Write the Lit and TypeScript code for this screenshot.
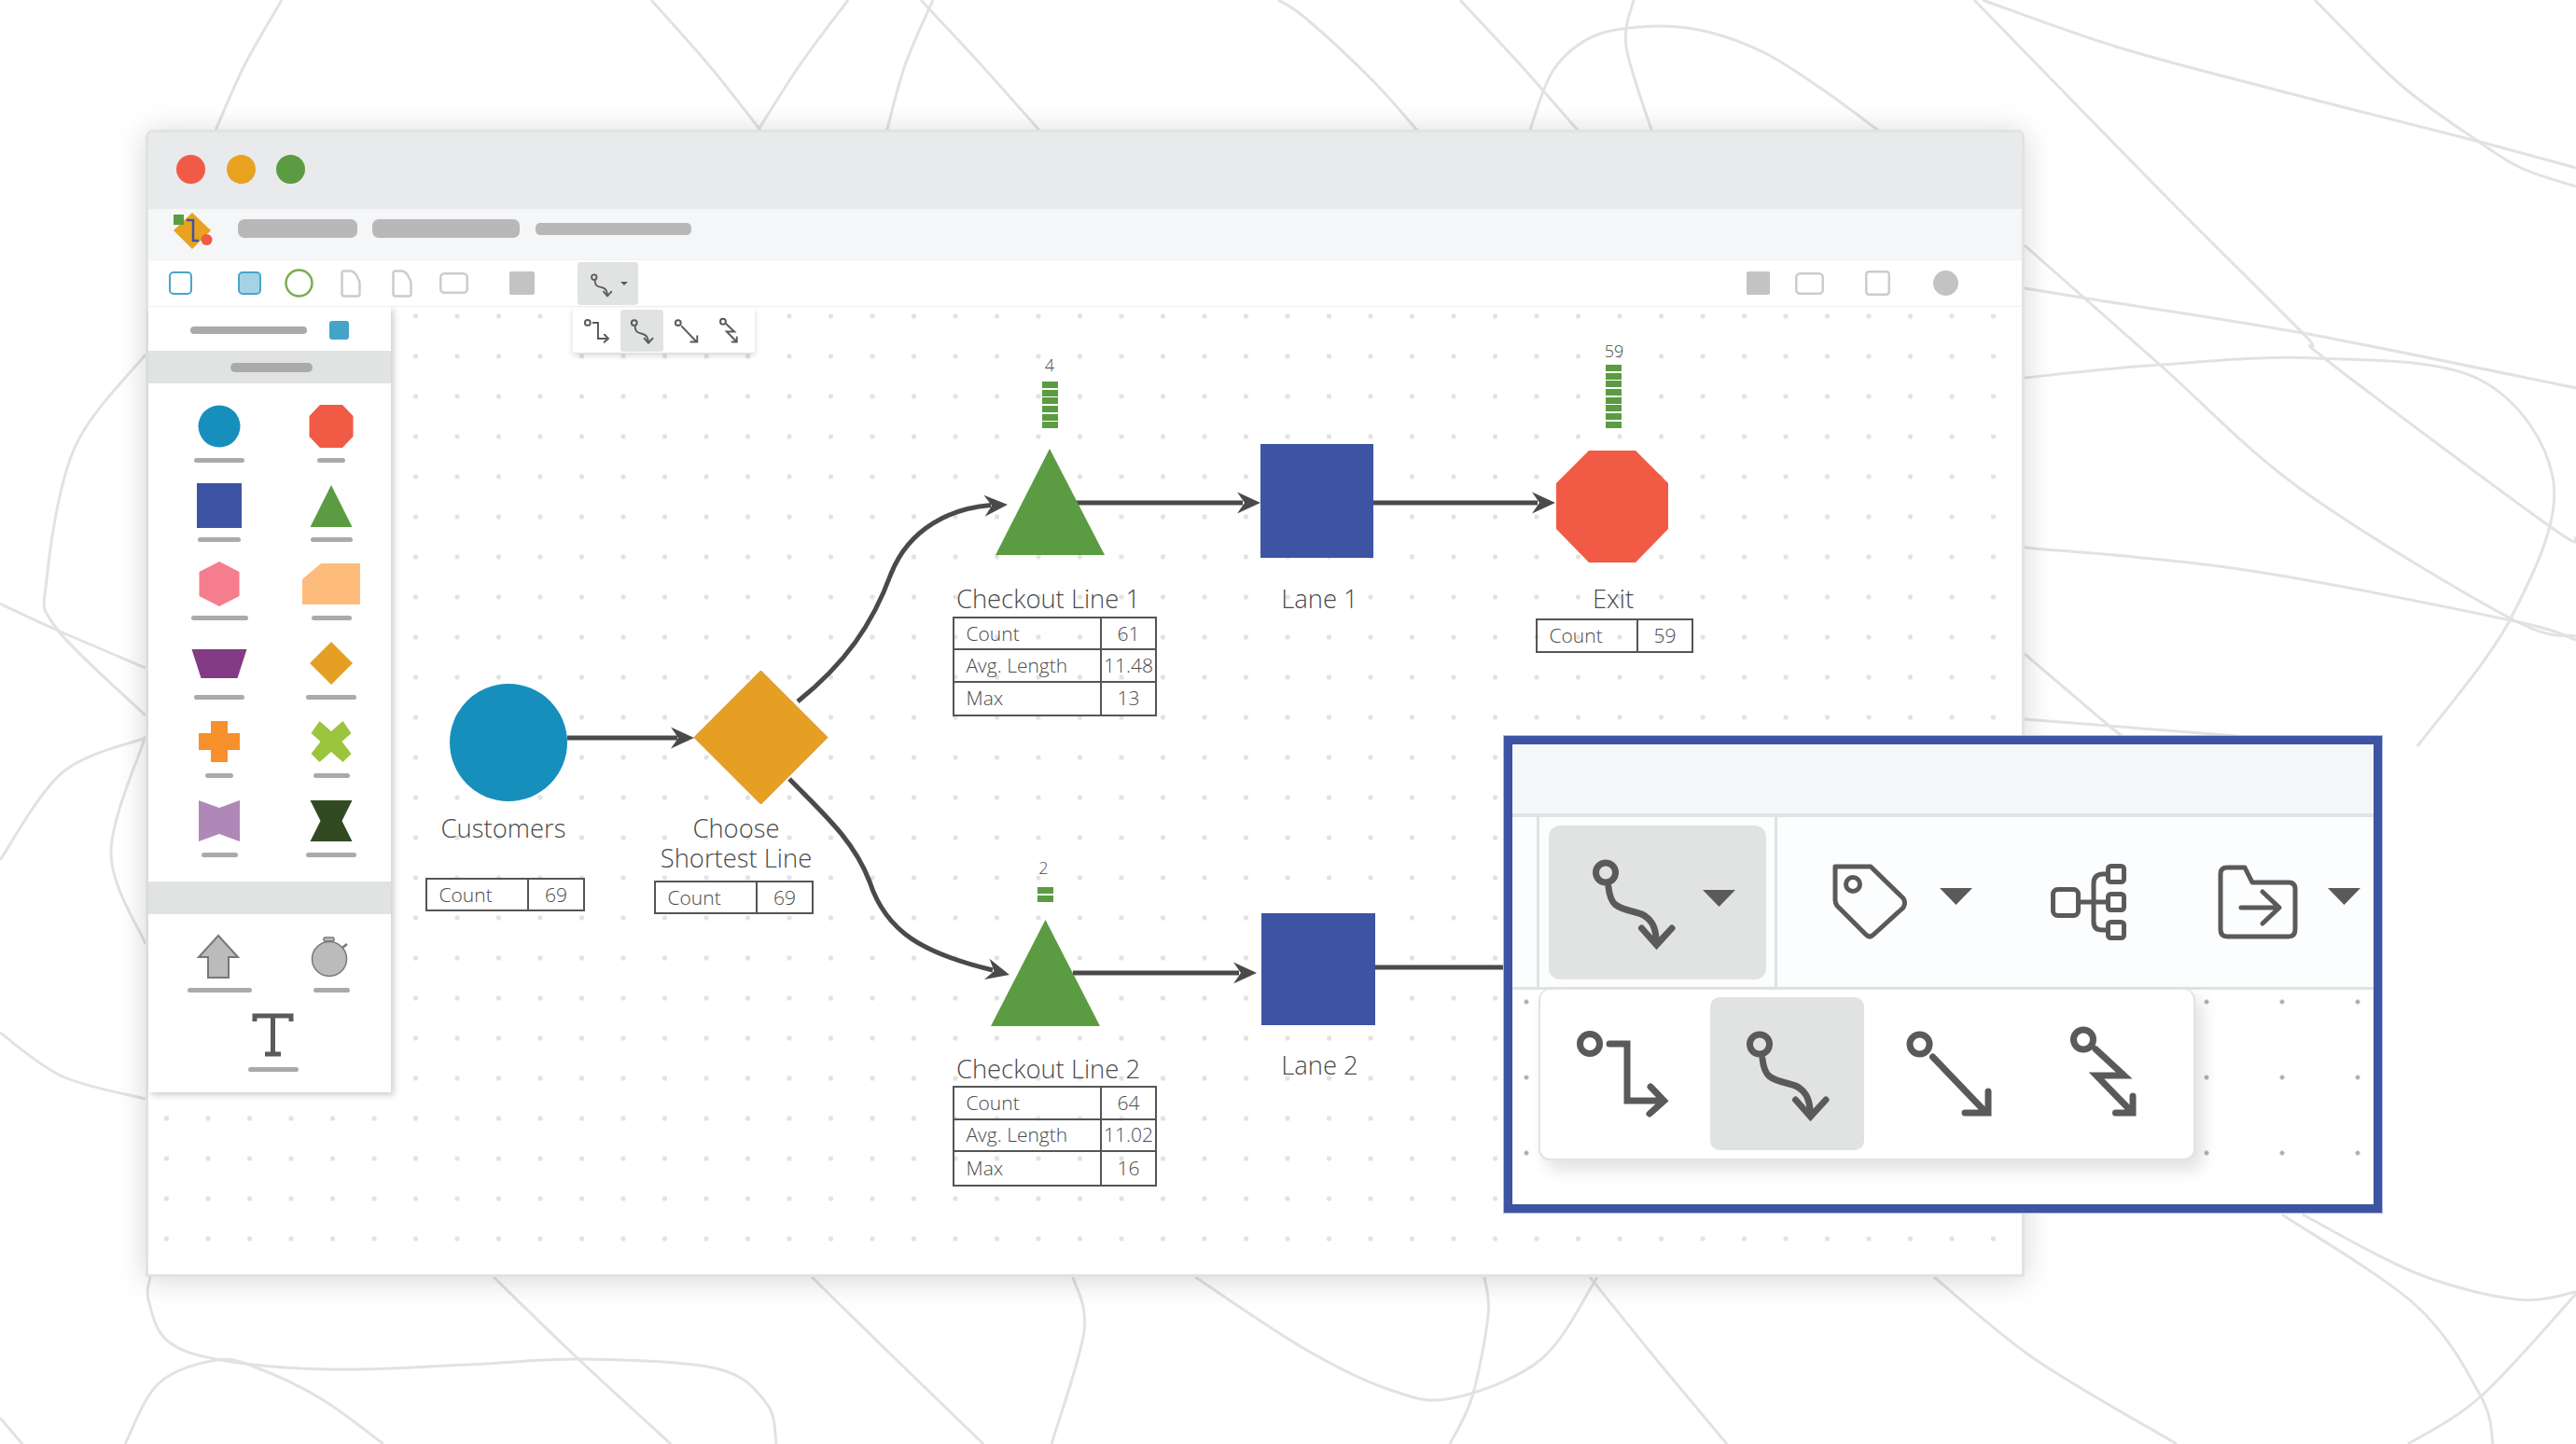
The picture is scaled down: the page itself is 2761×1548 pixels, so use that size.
import { LitElement, html, css, svg } from "lit";
import { customElement } from "lit/decorators.js";

type P = [number, number];

function smooth(pts: P[]): string {
  let d = `M${pts[0][0]} ${pts[0][1]}`;
  for (let i = 0; i < pts.length - 1; i++) {
    const p0 = pts[i - 1] || pts[i];
    const p1 = pts[i];
    const p2 = pts[i + 1];
    const p3 = pts[i + 2] || p2;
    const c1x = p1[0] + (p2[0] - p0[0]) / 6;
    const c1y = p1[1] + (p2[1] - p0[1]) / 6;
    const c2x = p2[0] - (p3[0] - p1[0]) / 6;
    const c2y = p2[1] - (p3[1] - p1[1]) / 6;
    d += ` C${c1x} ${c1y} ${c2x} ${c2y} ${p2[0]} ${p2[1]}`;
  }
  return d;
}

const BG: P[][] = [
  [[302, 0], [262, 70], [230, 142]],
  [[698, 0], [760, 70], [817, 142]],
  [[909, 0], [857, 70], [811, 142]],
  [[1000, 0], [970, 70], [950, 142]],
  [[987, 0], [1052, 70], [1116, 142]],
  [[1370, 0], [1400, 20], [1470, 85], [1521, 142]],
  [[1565, 0], [1630, 70], [1693, 142]],
  [[1751, 0], [1743, 50], [1771, 142]],
  [[1639, 142], [1665, 75], [1710, 38], [1775, 28], [1830, 34], [1892, 57], [1955, 97], [2016, 142]],
  [[2116, 0], [2311, 200], [2468, 357], [2495, 387], [2731, 563], [2761, 577]],
  [[2125, 0], [2268, 50], [2442, 97], [2650, 150], [2761, 180]],
  [[2481, 0], [2572, 90], [2654, 150], [2702, 180], [2761, 200]],
  [[2170, 263], [2315, 391], [2467, 525], [2691, 663], [2761, 682]],
  [[2170, 309], [2237, 320], [2468, 357], [2761, 416]],
  [[2170, 405], [2315, 391], [2482, 384], [2658, 407], [2737, 518], [2691, 663], [2591, 800]],
  [[2170, 587], [2400, 610], [2691, 665], [2761, 686]],
  [[2170, 701], [2258, 776], [2275, 789]],
  [[2170, 771], [2398, 789]],
  [[156, 380], [80, 480], [50, 621], [60, 673], [156, 767]],
  [[0, 647], [60, 675], [156, 716]],
  [[0, 922], [67, 828], [156, 791]],
  [[156, 789], [119, 914], [156, 1012]],
  [[0, 1107], [67, 1154], [156, 1178]],
  [[0, 1520], [24, 1548]],
  [[161, 1369], [159, 1393], [179, 1437], [237, 1458], [357, 1468], [500, 1463], [625, 1457], [768, 1467], [822, 1505], [832, 1548]],
  [[134, 1548], [170, 1483], [232, 1458], [277, 1467], [345, 1500], [411, 1548]],
  [[529, 1369], [620, 1457], [719, 1548]],
  [[870, 1369], [960, 1457], [1054, 1548]],
  [[1150, 1369], [1162, 1427], [1127, 1548]],
  [[1281, 1369], [1400, 1447], [1490, 1490], [1556, 1499], [1652, 1457], [1712, 1369]],
  [[1591, 1369], [1595, 1410], [1578, 1497], [1554, 1548]],
  [[1704, 1369], [1775, 1457], [1851, 1548]],
  [[2073, 1369], [2181, 1457], [2333, 1548]],
  [[2446, 1302], [2590, 1400], [2659, 1497], [2672, 1548]],
  [[2468, 1302], [2590, 1365], [2698, 1393], [2761, 1385]],
  [[2761, 1387], [2659, 1497], [2581, 1548]],
];

const ICON = {
  elbow: svg`<circle cx="46" cy="50" r="10.5" class="st6"/><path class="st7" d="M67 50H86V111H124M111 96L125.500 111L110 125"/>`,
  curve: svg`<circle cx="53" cy="50.5" r="10.5" class="st6"/><path class="st7" d="M56 66C58 85 64 88 85 93C103 97 107 110 107.5 126M91.5 110L107.5 128L124 110"/>`,
  straight: svg`<circle cx="49.5" cy="50.5" r="10.5" class="st6"/><path class="st7" d="M63.5 64L120 123M98 124H123V101"/>`,
  zig: svg`<circle cx="50" cy="45.5" r="10.5" class="st6"/><path class="st7" d="M63 55.6L93.7 84H64L102 123M84.5 124H103V106"/>`,
};
const ICON_LIST = [ICON.elbow, ICON.curve, ICON.straight, ICON.zig];

const g = (pts: string, fill: string) => svg`<polygon points="${pts}" fill="${fill}"/>`;

const SHAPES: { body: unknown; pill: number }[] = [
  { body: svg`<circle cx="35" cy="30" r="22.5" fill="#178fbd"/>`, pill: 54 },
  { body: g("23,7 47,7 58.500,19 58.500,41 47,53 23,53 11.500,41 11.500,19", "#f15a45"), pill: 30 },
  { body: g("11,6 59,6 59,54 11,54", "#3d54a3"), pill: 46 },
  { body: g("35,8 57.500,53 12.500,53", "#5b9c42"), pill: 45 },
  { body: g("35,6 56.500,17 56.500,43 35,54 13.500,43 13.500,17", "#f67d8d"), pill: 61 },
  { body: g("4,25 24,8 66,8 66,52 4,52", "#fdbc7c"), pill: 43 },
  { body: g("5.500,15 64.500,15 54.500,46 15.500,46", "#823b84"), pill: 54 },
  { body: g("35,7 58,30 35,53 12,30", "#e5a024"), pill: 54 },
  { body: g("26,8 44,8 44,21 57,21 57,39 44,39 44,52 26,52 26,39 13,39 13,21 26,21", "#f7902a"), pill: 30 },
  { body: g("13.500,21 22.500,8 35,19 47.500,8 56.500,21 46.500,30 56.500,43 47.500,52 35,41 22.500,52 13.500,43 23.500,30", "#9bc53d"), pill: 39 },
  { body: g("13,8 35,16 57,8 57,52 35,44 13,52", "#b088b8"), pill: 39 },
  { body: g("12.500,8 57.500,8 46.500,30 57.500,52 12.500,52 23.500,30", "#324a22"), pill: 54 },
];

const TOOLS = [
  { x: 181, w: 25, h: 25, body: svg`<rect x="1" y="1" width="23" height="23" rx="4" fill="#fff" stroke="#48a5cb" stroke-width="2"/>` },
  { x: 255, w: 25, h: 25, body: svg`<rect x="1" y="1" width="23" height="23" rx="4" fill="#a5d3e5" stroke="#48a5cb" stroke-width="2"/>` },
  { x: 305, w: 31, h: 31, body: svg`<circle cx="15.500" cy="15.500" r="14" fill="#fff" stroke="#79ad52" stroke-width="2.500"/>` },
  { x: 364, w: 23, h: 30, body: svg`<path d="M2.500 4Q2.500 1.500 5 1.500H11Q15 1.500 18 6L20 10Q21.500 12 21.500 15V26Q21.500 28.500 19 28.500H5Q2.500 28.500 2.500 26Z" fill="#fff" stroke="#ccc" stroke-width="2.500"/>` },
  { x: 419, w: 23, h: 30, body: svg`<path d="M2.500 4Q2.500 1.500 5 1.500H11Q15 1.500 18 6L20 10Q21.500 12 21.500 15V26Q21.500 28.500 19 28.500H5Q2.500 28.500 2.500 26Z" fill="#fff" stroke="#ccc" stroke-width="2.500"/>` },
  { x: 471, w: 31, h: 23, body: svg`<rect x="1.250" y="1.250" width="28.500" height="20.500" rx="4" fill="#fff" stroke="#ccc" stroke-width="2.500"/>` },
  { x: 546, w: 27, h: 25, body: svg`<rect width="27" height="25" rx="2" fill="#c4c3c3"/>` },
];
const TOOLS_RIGHT = [
  { x: 1872, w: 25, h: 25, body: svg`<rect width="25" height="25" rx="2" fill="#c4c3c3"/>` },
  { x: 1924, w: 31, h: 24, body: svg`<rect x="1.250" y="1.250" width="28.500" height="21.500" rx="4" fill="#fff" stroke="#ccc" stroke-width="2.500"/>` },
  { x: 1999, w: 27, h: 27, body: svg`<rect x="1.250" y="1.250" width="24.500" height="24.500" rx="3" fill="#fff" stroke="#ccc" stroke-width="2.500"/>` },
  { x: 2072, w: 27, h: 27, body: svg`<circle cx="13.500" cy="13.500" r="13.500" fill="#c4c3c3"/>` },
];

const OX = 159;
const OY = 329;

const LABELS: { t: string[]; x: number; y: number }[] = [
  { t: ["Customers"], x: 539.5, y: 887.5 },
  { t: ["Choose", "Shortest Line"], x: 789, y: 904 },
  { t: ["Checkout Line 1"], x: 1123.5, y: 641.5 },
  { t: ["Lane 1"], x: 1414.5, y: 641.5 },
  { t: ["Exit"], x: 1729, y: 641.5 },
  { t: ["Checkout Line 2"], x: 1123.5, y: 1145.5 },
  { t: ["Lane 2"], x: 1414.5, y: 1141.5 },
];

const TABLES: { x: number; y: number; w: number; c: number; h: number; rows: string[][] }[] = [
  { x: 456, y: 941, w: 171, c: 111, h: 36, rows: [["Count", "69"]] },
  { x: 701, y: 944, w: 171, c: 111, h: 36, rows: [["Count", "69"]] },
  { x: 1021, y: 661, w: 219, c: 160, h: 107, rows: [["Count", "61"], ["Avg. Length", "11.48"], ["Max", "13"]] },
  { x: 1646, y: 663, w: 169, c: 110, h: 37, rows: [["Count", "59"]] },
  { x: 1021, y: 1164, w: 219, c: 160, h: 108, rows: [["Count", "64"], ["Avg. Length", "11.02"], ["Max", "16"]] },
];

const COUNTERS = [
  { t: "4", tx: 1125, ty: 390.5, x: 1117, y: 409, n: 6 },
  { t: "59", tx: 1730, ty: 376, x: 1721, y: 391, n: 8 },
  { t: "2", tx: 1118.5, ty: 930, x: 1112, y: 951, n: 2 },
];

const ARROW = "0,0 -25,-11.500 -17,0 -25,11.500";
const arrow = (x: number, y: number, a = 0) =>
  svg`<polygon points="${ARROW}" fill="#4a4a4a" transform="translate(${x} ${y}) rotate(${a})"/>`;

@customElement("app-root")
export class AppRoot extends LitElement {
  static styles = css`
    :host { display: block; position: relative; width: 2761px; height: 1548px; background: #fff; overflow: hidden; font-family: "Open Sans", "Liberation Sans", sans-serif; color: #4a4a4a; }
    .bg { position: absolute; inset: 0; width: 2761px; height: 1548px; }
    .bg path { fill: none; stroke: #e1e2e2; stroke-width: 3; }
    .stage { position: relative; padding: 139px 0 0 156px; }
    .window { position: relative; box-sizing: border-box; width: 2014px; height: 1230px; border: 3px solid #e1e3e3; border-radius: 8px 8px 0 0; background: #fff; box-shadow: 0 3px 32px rgba(0, 0, 0, .17); display: flex; flex-direction: column; }
    .title { height: 82px; flex: none; background: #e9eaec; display: flex; align-items: center; gap: 22.500px; padding: 0 0 4px 30px; box-sizing: border-box; border-radius: 5px 5px 0 0; }
    .light { width: 31px; height: 31px; border-radius: 50%; }
    .red { background: #f15a45; } .amber { background: #e8a220; } .green { background: #5b9c42; }
    .menu { height: 54px; flex: none; box-sizing: border-box; background: #f5f6f8; display: flex; align-items: flex-start; padding: 4px 0 0 27px; }
    .logo { width: 42px; height: 39px; flex: none; }
    .mp { background: #b8b8b8; border-radius: 7px; height: 20px; margin-top: 7px; }
    .mp.a { width: 128px; margin-left: 27px; }
    .mp.b { width: 158px; margin-left: 16px; }
    .mp.c { width: 167px; height: 13px; margin: 11px 0 0 17px; border-radius: 5px; }
    .toolbar { position: relative; z-index: 3; height: 51px; flex: none; box-sizing: border-box; border-top: 1px solid #f1f2f3; border-bottom: 1px solid #eff0f1; display: flex; align-items: center; background: #fff; }
    .toolbar svg { display: block; flex: none; }
    .active { box-sizing: border-box; width: 65px; height: 46px; background: #e1e3e3; border-radius: 3px; display: flex; padding: 3px 0 0 4px; flex: none; }
    .active svg { width: 43px; height: 43px; }
    .active svg.mini-caret { width: 10px; height: 4px; margin: 18px 0 0 -2px; }
    .st6 { fill: none; stroke: #5a5a5a; stroke-width: 7; }
    .st7 { fill: none; stroke: #5a5a5a; stroke-width: 7; stroke-linejoin: miter; stroke-linecap: round; }
    .pop { position: absolute; left: 455px; top: 51px; z-index: 3; box-sizing: border-box; width: 195px; height: 48px; padding: 2px 3px; display: flex; gap: 2px; background: #fff; border-radius: 2px; box-shadow: 0 3px 6px rgba(0, 0, 0, .16); }
    .pop .it { width: 46px; height: 45px; border-radius: 3px; }
    .pop .it.on { background: #e1e3e3; }
    .pop svg { width: 46px; height: 46px; display: block; }

    .main { position: relative; flex: 1; display: flex; align-items: flex-start; background-color: #fff; background-image: radial-gradient(circle at center, #e2e2e2 0, #e2e2e2 2.500px, transparent 3px); background-size: 44.500px 43px; background-position: -2.750px -11.500px; }
    .side { position: relative; z-index: 2; box-sizing: border-box; width: 260px; height: 842px; background: #fff; box-shadow: 3px 3px 7px rgba(0, 0, 0, .2); display: flex; flex-direction: column; flex: none; }
    .side-top { height: 47px; flex: none; box-sizing: border-box; display: flex; align-items: center; padding: 2px 0 0 45px; gap: 24px; }
    .p-a { width: 125px; height: 8px; background: #aaa; border-radius: 4px; }
    .p-b { width: 21px; height: 20px; background: #45a3c9; border-radius: 3px; }
    .band { height: 35px; flex: none; background: #e1e3e3; display: flex; align-items: center; justify-content: center; }
    .band i { display: block; width: 88px; height: 10px; background: #aaa; border-radius: 5px; margin-left: 4px; }
    .grid { display: grid; grid-template-columns: 120px 120px; box-sizing: border-box; height: 534px; flex: none; padding: 16px 0 0 16px; row-gap: 15.500px; align-content: start; }
    .grid.two { padding-top: 15px; row-gap: 16px; height: auto; flex: 1; }
    .cell { display: flex; flex-direction: column; align-items: center; gap: 4px; }
    .cell svg { width: 70px; height: 60px; display: block; }
    .cell.wide { grid-column: 1 / 3; margin-left: -4px; }
    .cell u { display: block; height: 5px; background: #aaa; border-radius: 3px; }

    .diagram { position: absolute; left: 0; top: 0; width: 2008px; height: 1037px; pointer-events: none; }
    .node { position: absolute; transform: translate(-50%, -50%); white-space: nowrap; text-align: center; font-size: 27.400px; line-height: 32px; font-weight: 300; color: #4a4a4a; }
    .count { position: absolute; transform: translate(-50%, -50%); font-size: 18px; line-height: 20px; font-weight: 300; }
    .bars { position: absolute; display: flex; flex-direction: column; gap: 1.700px; }
    .bars i { display: block; width: 17px; height: 7px; background: #5b9c42; }
    .tbl { position: absolute; box-sizing: border-box; border: 2px solid #555; display: grid; background: transparent; font-size: 21px; font-weight: 300; color: #4a4a4a; }
    .tbl > div { display: flex; align-items: center; box-sizing: border-box; border-bottom: 2px solid #555; white-space: nowrap; line-height: 1; }
    .tbl > div.l { padding-left: 12.500px; border-right: 2px solid #555; }
    .tbl > div.v { justify-content: center; }
    .tbl > div.end { border-bottom: 0; }

    .callout { position: absolute; left: 1612px; top: 789px; z-index: 5; box-sizing: border-box; width: 941px; height: 511px; border: 9px solid #3d54a3; box-shadow: 0 0 0 1px #aeb8d8; background: #fff; display: flex; flex-direction: column; }
    .c-band { height: 74px; flex: none; background: #f5f6f8; border-bottom: 4px solid #e1e3e3; box-sizing: content-box; }
    .c-tools { height: 182px; flex: none; background: #fcfdfe; border-bottom: 3px solid #e1e3e3; display: flex; align-items: center; position: relative; }
    .c-tools .sep { width: 3px; height: 182px; background: #e1e3e3; flex: none; }
    .c-tools svg { display: block; flex: none; }
    .c-active { box-sizing: border-box; width: 233px; height: 165px; background: #e1e3e3; border-radius: 12px; display: flex; flex: none; padding-left: 8px; }
    .c-active svg { width: 165px; height: 165px; }
    .c-active svg.c-caret { width: 35px; height: 18px; margin: 69px 0 0 -8px; }
    .c-caret { width: 35px; height: 18px; margin-top: -13px; }
    .c-canvas { position: relative; flex: 1; background-color: #fff; background-image: radial-gradient(circle at center, #aaa 0, #aaa 2px, transparent 2.600px); background-size: 81px 81px; background-position: -25.500px -27.500px; }
    .c-pop { position: absolute; left: 28px; top: -1px; box-sizing: border-box; width: 704px; height: 184px; padding: 8px 7px; display: flex; gap: 10px; background: #fff; border: 2px solid #e1e3e3; border-top-width: 1px; border-radius: 12px; box-shadow: 8px 10px 18px rgba(0, 0, 0, .12); }
    .c-pop .it { width: 165px; height: 164px; border-radius: 10px; flex: none; }
    .c-pop .it.on { background: #e1e3e3; }
    .c-pop svg { width: 165px; height: 165px; display: block; }
  `;

  private place(x: number, y: number) {
    return `left:${x - OX}px;top:${y - OY}px`;
  }

  private lineIcon(body: unknown) {
    return html`<svg viewBox="0 0 165 165">${body}</svg>`;
  }

  private caret(cls: string, style = "") {
    return html`<svg class=${cls} style=${style} viewBox="0 0 35 18"><polygon points="0,0 35,0 17.500,18" fill="#5a5a5a"/></svg>`;
  }

  private toolRow(list: typeof TOOLS, start: number) {
    let prev = start;
    return list.map((t) => {
      const m = t.x - prev;
      prev = t.x + t.w;
      return html`<svg style="margin-left:${m}px" width=${t.w} height=${t.h} viewBox="0 0 ${t.w} ${t.h}">${t.body}</svg>`;
    });
  }

  render() {
    return html`
      <svg class="bg" viewBox="0 0 2761 1548">
        ${BG.map((p) => svg`<path d="${smooth(p)}"/>`)}
      </svg>
      <div class="stage">
        <div class="window">
          <div class="title"><div class="light red"></div><div class="light amber"></div><div class="light green"></div></div>
          <div class="menu">
            <svg class="logo" viewBox="186 228 42 39">
              <polygon points="206,228 226,247 206,267 186,247" fill="#e8a220"/>
              <rect x="186" y="230" width="11" height="11" fill="#5b9c42"/>
              <path d="M200 236H207V258H213" fill="none" stroke="#3d54a3" stroke-width="2.500"/>
              <circle cx="221.500" cy="257" r="6" fill="#f15a45"/>
            </svg>
            <div class="mp a"></div><div class="mp b"></div><div class="mp c"></div>
          </div>
          <div class="toolbar">
            ${this.toolRow(TOOLS, OX)}
            <div class="active" style="margin-left:46px">
              <svg viewBox="0 0 165 165">${ICON.curve}</svg>
              ${this.caret("mini-caret")}
            </div>
            ${this.toolRow(TOOLS_RIGHT, 684)}
            <div class="pop">
              ${ICON_LIST.map((b, i) => html`<div class="it ${i === 1 ? "on" : ""}">${this.lineIcon(b)}</div>`)}
            </div>
          </div>
          <div class="main">
            <aside class="side">
              <div class="side-top"><div class="p-a"></div><div class="p-b"></div></div>
              <div class="band"><i></i></div>
              <div class="grid">
                ${SHAPES.map((s) => html`<div class="cell"><svg viewBox="0 0 70 60">${s.body}</svg><u style="width:${s.pill}px"></u></div>`)}
              </div>
              <div class="band"></div>
              <div class="grid two">
                <div class="cell"><svg viewBox="0 0 70 60"><polygon points="34,8 55,31 45,31 45,53 23,53 23,31 13,31" fill="#bbb" stroke="#777" stroke-width="2"/></svg><u style="width:69px"></u></div>
                <div class="cell"><svg viewBox="0 0 70 60">
                  <circle cx="33" cy="33" r="18.500" fill="#bbb" stroke="#777" stroke-width="1.500"/>
                  <rect x="27" y="10" width="11" height="4" rx="1.500" fill="#bbb" stroke="#777" stroke-width="1.500"/>
                  <path d="M32.500 14V15M47 21L52 17" stroke="#777" stroke-width="2.500" fill="none"/>
                </svg><u style="width:39px"></u></div>
                <div class="cell wide"><svg viewBox="0 0 70 60"><path d="M15 15V9H54V15M34.500 9V50M26 50H43" fill="none" stroke="#5a5a5a" stroke-width="5"/></svg><u style="width:54px"></u></div>
              </div>
            </aside>
            <svg class="diagram" viewBox="159 329 2008 1037">
              <g fill="none" stroke="#4a4a4a" stroke-width="5">
                <path d="M608 791H726"/>
                <path d="M855 752C905 712 935 670 955 615C975 565 1020 545 1062 541.500"/>
                <path d="M846 835C880 870 915 900 932 945C950 1000 990 1022 1064 1040"/>
                <path d="M1150 539H1332"/>
                <path d="M1472 539H1648"/>
                <path d="M1150 1043H1328"/>
                <path d="M1474 1037H1620"/>
              </g>
              ${arrow(744, 791)}${arrow(1080, 541, -3)}${arrow(1082, 1045, 14)}
              ${arrow(1351, 539)}${arrow(1667, 539)}${arrow(1347, 1043)}
              <circle cx="545" cy="796" r="63" fill="#178fbd"/>
              <polygon points="815.500,719 887,790.500 815.500,862 744,790.500" fill="#e5a024" stroke="#d18a1f" stroke-width="1"/>
              <polygon points="1125,481 1184,595 1067,595" fill="#5b9c42"/>
              <rect x="1351" y="476" width="121" height="122" fill="#3d54a3"/>
              <polygon points="1703,483 1753,483 1788,518 1788,567 1753,603 1703,603 1668,567 1668,518" fill="#f15a45"/>
              <polygon points="1120.500,986 1179,1100 1062,1100" fill="#5b9c42"/>
              <rect x="1352" y="979" width="122" height="120" fill="#3d54a3"/>
            </svg>
            ${LABELS.map((l) => html`<div class="node" style=${this.place(l.x, l.y)}>${l.t.map((s) => html`<div>${s}</div>`)}</div>`)}
            ${COUNTERS.map((c) => html`
              <div class="count" style=${this.place(c.tx, c.ty)}>${c.t}</div>
              <div class="bars" style=${this.place(c.x, c.y)}>${Array.from({ length: c.n }, () => html`<i></i>`)}</div>`)}
            ${TABLES.map((t) => html`
              <div class="tbl" style="${this.place(t.x, t.y)};width:${t.w}px;grid-template-columns:${t.c - 2}px 1fr;grid-auto-rows:${(t.h - 4) / t.rows.length}px">
                ${t.rows.map((r, i) => html`
                  <div class="l ${i === t.rows.length - 1 ? "end" : ""}">${r[0]}</div>
                  <div class="v ${i === t.rows.length - 1 ? "end" : ""}">${r[1]}</div>`)}
              </div>`)}
          </div>
        </div>
      </div>
      <div class="callout">
        <div class="c-band"></div>
        <div class="c-tools">
          <div class="sep" style="margin-left:26px"></div>
          <div class="c-active" style="margin-left:10px">
            <svg viewBox="0 0 165 165">${ICON.curve}</svg>
            ${this.caret("c-caret")}
          </div>
          <div class="sep" style="margin-left:9px"></div>
          <svg style="margin-left:59px" width="82" height="83" viewBox="1964 925 82 83">
            <path d="M1967 928H2005L2040 962Q2043 967 2040 972L2008 1001Q2004 1005 2000 1001L1969 970Q1967 967 1967 964Z" fill="none" stroke="#5a5a5a" stroke-width="5" stroke-linejoin="round"/>
            <circle cx="1986" cy="947" r="7.500" fill="none" stroke="#5a5a5a" stroke-width="5"/>
          </svg>
          ${this.caret("c-caret", "margin-left:33px")}
          <svg style="margin-left:84px" width="82" height="83" viewBox="2197 925 82 83">
            <g fill="none" stroke="#5a5a5a" stroke-width="5">
              <rect x="2199.500" y="952.500" width="27" height="28" rx="5"/>
              <rect x="2258.500" y="927.500" width="17" height="17" rx="3"/>
              <rect x="2258.500" y="957.500" width="17" height="17" rx="3"/>
              <rect x="2258.500" y="987.500" width="17" height="17" rx="3"/>
              <path d="M2227 966H2258M2243 966V946Q2243 937 2252 936H2258M2243 966V987Q2243 996 2252 996H2258"/>
            </g>
          </svg>
          <svg style="margin-left:97px" width="86" height="80" viewBox="2376 926 86 80">
            <g fill="none" stroke="#5a5a5a" stroke-width="5" stroke-linecap="round" stroke-linejoin="round">
              <path d="M2386 929H2405L2413 945H2452Q2459 945 2459 952V995Q2459 1003 2452 1003H2386Q2379 1003 2379 995V936Q2379 929 2386 929Z"/>
              <path d="M2401 972H2441M2424 955L2442 972L2424 989"/>
            </g>
          </svg>
          ${this.caret("c-caret", "margin-left:32px")}
        </div>
        <div class="c-canvas">
          <div class="c-pop">
            ${ICON_LIST.map((b, i) => html`<div class="it ${i === 1 ? "on" : ""}">${this.lineIcon(b)}</div>`)}
          </div>
        </div>
      </div>
    `;
  }
}
